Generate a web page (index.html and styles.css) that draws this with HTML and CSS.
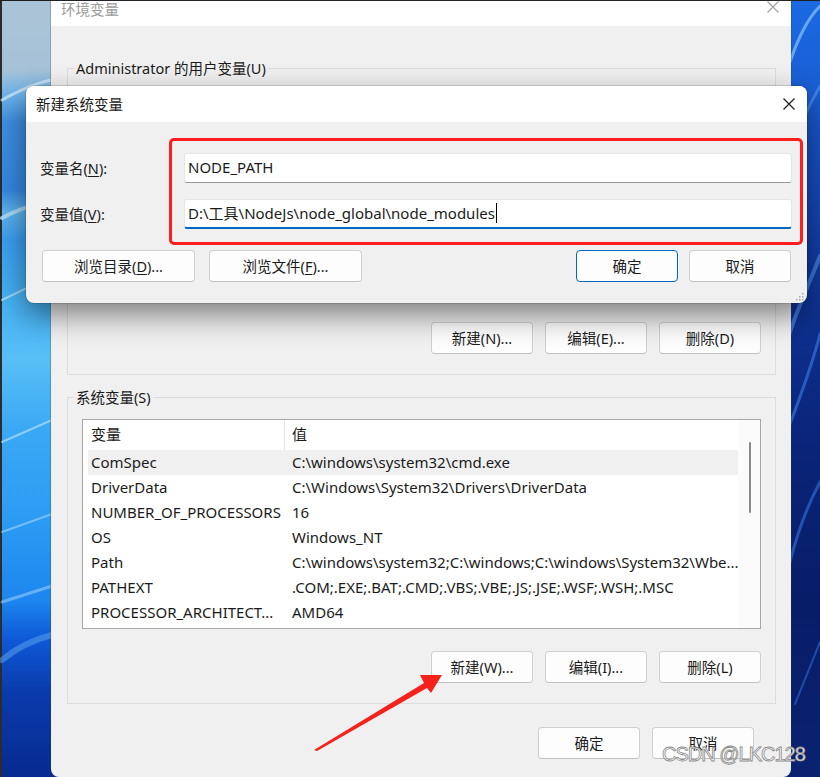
FILE: index.html
```html
<!DOCTYPE html>
<html lang="zh-CN">
<head>
<meta charset="utf-8">
<title>环境变量</title>
<link rel="stylesheet" href="styles.css">
</head>
<body>
<div class="desktop">
  <svg class="swirls" width="820" height="777" viewBox="0 0 820 777">
    <g fill="none" stroke-linecap="round">
      <path d="M2 100 C20 90 40 82 52 80" stroke="#d6ecfb" stroke-width="3" opacity=".7"/>
      <path d="M2 218 C20 208 40 203 52 199" stroke="#b6e2fa" stroke-width="4" opacity=".8"/>
      <path d="M2 300 L52 276" stroke="#cdeeff" stroke-width="2" opacity=".6"/>
      <path d="M2 442 L52 420" stroke="#c2e8ff" stroke-width="2" opacity=".6"/>
      <path d="M2 532 L52 514" stroke="#b8e2ff" stroke-width="2" opacity=".5"/>
      <path d="M2 602 L52 586" stroke="#a8d8ff" stroke-width="3" opacity=".5"/>
      <path d="M2 660 C20 645 40 638 52 635" stroke="#5fa8f0" stroke-width="6" opacity=".5"/>
      <path d="M790 62 C800 32 810 16 820 6" stroke="#7ab8ff" stroke-width="3" opacity=".8"/>
      <path d="M790 150 C802 120 812 100 820 86" stroke="#4a90ee" stroke-width="3" opacity=".7"/>
      <path d="M790 332 C800 302 810 282 820 256" stroke="#4a8cec" stroke-width="4" opacity=".7"/>
      <path d="M790 424 C805 384 815 354 820 334" stroke="#3672d8" stroke-width="3" opacity=".7"/>
      <path d="M790 562 C800 522 812 497 820 482" stroke="#2e66cc" stroke-width="3" opacity=".7"/>
      <path d="M795 704 L820 642" stroke="#2c5fc4" stroke-width="2" opacity=".7"/>
    </g>
  </svg>

  <div class="env-window">
    <div class="titlebar">
      <span class="title">环境变量</span>
      <svg class="close-x muted" width="12" height="12" viewBox="0 0 12 12"><path d="M0.5 0.5 L11.5 11.5 M11.5 0.5 L0.5 11.5"/></svg>
    </div>
    <div class="env-body">
      <fieldset class="group">
        <legend>Administrator 的用户变量(U)</legend>
        <div class="listbox"></div>
        <div class="btn-row">
          <button class="btn">新建(N)...</button>
          <button class="btn">编辑(E)...</button>
          <button class="btn">删除(D)</button>
        </div>
      </fieldset>

      <fieldset class="group group-sys">
        <legend>系统变量(S)</legend>
        <div class="listbox">
          <div class="list-table">
            <div class="row head"><span class="c-name">变量</span><span class="c-val">值</span></div>
            <div class="row selected"><span class="c-name">ComSpec</span><span class="c-val">C:\windows\system32\cmd.exe</span></div>
            <div class="row"><span class="c-name">DriverData</span><span class="c-val">C:\Windows\System32\Drivers\DriverData</span></div>
            <div class="row"><span class="c-name">NUMBER_OF_PROCESSORS</span><span class="c-val">16</span></div>
            <div class="row"><span class="c-name">OS</span><span class="c-val">Windows_NT</span></div>
            <div class="row"><span class="c-name">Path</span><span class="c-val">C:\windows\system32;C:\windows;C:\windows\System32\Wbe...</span></div>
            <div class="row"><span class="c-name">PATHEXT</span><span class="c-val">.COM;.EXE;.BAT;.CMD;.VBS;.VBE;.JS;.JSE;.WSF;.WSH;.MSC</span></div>
            <div class="row"><span class="c-name">PROCESSOR_ARCHITECT...</span><span class="c-val">AMD64</span></div>
          </div>
          <div class="scrollbar"><div class="thumb"></div></div>
        </div>
        <div class="btn-row">
          <button class="btn">新建(W)...</button>
          <button class="btn">编辑(I)...</button>
          <button class="btn">删除(L)</button>
        </div>
      </fieldset>

      <div class="footer-row">
        <button class="btn">确定</button>
        <button class="btn">取消</button>
      </div>
    </div>
  </div>

  <div class="dialog">
    <div class="dlg-title">
      <span>新建系统变量</span>
      <svg class="close-x" width="12" height="12" viewBox="0 0 12 12"><path d="M0.5 0.5 L11.5 11.5 M11.5 0.5 L0.5 11.5"/></svg>
    </div>
    <div class="dlg-body">
      <div class="field">
        <span class="field-label">变量名(<u>N</u>):</span>
        <div class="input">NODE_PATH</div>
      </div>
      <div class="field">
        <span class="field-label">变量值(<u>V</u>):</span>
        <div class="input focused">D:\工具\NodeJs\node_global\node_modules<span class="caret"></span></div>
      </div>
      <div class="dlg-buttons">
        <button class="btn wide">浏览目录(<u>D</u>)...</button>
        <button class="btn wide">浏览文件(<u>F</u>)...</button>
        <span class="spacer"></span>
        <button class="btn default">确定</button>
        <button class="btn">取消</button>
      </div>
    </div>
    <div class="highlight"></div>
    <svg class="grip" width="10" height="10" viewBox="0 0 10 10">
      <g fill="#a8a8a8">
        <rect x="8" y="2" width="1.5" height="1.5"/>
        <rect x="5" y="5" width="1.5" height="1.5"/><rect x="8" y="5" width="1.5" height="1.5"/>
        <rect x="2" y="8" width="1.5" height="1.5"/><rect x="5" y="8" width="1.5" height="1.5"/><rect x="8" y="8" width="1.5" height="1.5"/>
      </g>
    </svg>
  </div>

  <svg class="arrow" width="820" height="777" viewBox="0 0 820 777">
    <polygon points="314,750 424,683 420,675 442,675 431,693 427,688 317,751" fill="#f5221b"/>
  </svg>

  <div class="watermark">CSDN @LKC128</div>
</div>
</body>
</html>
```

FILE: styles.css
```css
* { box-sizing: border-box; }

html, body {
  margin: 0;
  padding: 0;
}

body {
  background: #1f1f1f;
  font-family: "Noto Sans", "Noto Sans CJK SC", sans-serif;
  font-size: 14.5px;
  color: #1b1b1b;
}

.desktop {
  position: relative;
  width: 820px;
  height: 777px;
  overflow: hidden;
  background:
    linear-gradient(#1e1e1e, #1e1e1e) left top / 100% 1px no-repeat,
    linear-gradient(#2c2c2c, #2c2c2c) left top / 2px 100% no-repeat,
    linear-gradient(180deg, #abc3d6 0, #a6c2d8 70px, #6eb3ea 95px, #3e8fe2 122px, #3487e0 190px, #5fb4ee 212px, #3a9ef0 240px, #46b2f4 300px, #58bff6 360px, #3aa8f4 430px, #2c9bf3 520px, #1d86ef 600px, #0e58d6 640px, #0a3cae 690px, #072a8e 777px) left top / 60px 100% no-repeat,
    linear-gradient(180deg, #1a6ae2 0, #1a5ed4 90px, #1547b8 200px, #0d2f8c 330px, #0a2478 450px, #081d68 600px, #0a2270 777px) right top / 40px 100% no-repeat,
    #0d3a9e;
}

.swirls {
  position: absolute;
  left: 0;
  top: 0;
}

/* ---------- main window ---------- */
.env-window {
  position: absolute;
  left: 51px;
  top: 1px;
  width: 740px;
  height: 776px;
  background: #f0f0f0;
  border-radius: 0 0 8px 8px;
  box-shadow: 0 0 0 1px rgba(40, 60, 80, 0.25);
  overflow: hidden;
}

.titlebar {
  height: 25px;
  background: #fff;
  display: flex;
  justify-content: space-between;
  align-items: flex-start;
  padding: 0 12px 0 10px;
}

.title {
  color: #9b9b9b;
  line-height: 16px;
}

.close-x path {
  stroke: #1b1b1b;
  stroke-width: 1.2;
  fill: none;
}

.close-x.muted path {
  stroke: #a3a3a3;
}

.env-body {
  padding: 32px 15px 0 16px;
}

.group {
  margin: 0;
  padding: 12px 14px 20px 14px;
  border: 1px solid #dcdcdc;
  min-width: 0;
}

.group legend {
  padding: 0 2px;
  margin-left: -8px;
  line-height: 20px;
}

.group-sys {
  margin-top: 12px;
}

.listbox {
  height: 210px;
  border: 1px solid #a5a5a5;
  background: #fff;
  display: flex;
}

.list-table {
  flex: 1;
  overflow: hidden;
}

.row {
  display: flex;
  margin-left: 5px;
  height: 25px;
  line-height: 25px;
  font-size: 15px;
  white-space: nowrap;
}

.row.head {
  height: 30px;
  line-height: 28px;
}

.row.selected {
  background: #f0f0f0;
}

.c-name {
  width: 197px;
  flex: none;
  padding-left: 3px;
  overflow: hidden;
}

.row.head .c-name {
  border-right: 1px solid #e5e5e5;
}

.c-val {
  padding-left: 7px;
}

.scrollbar {
  width: 22px;
  flex: none;
  background: #fbfbfb;
}

.thumb {
  width: 2px;
  height: 71px;
  margin: 22px 0 0 11px;
  border-radius: 1px;
  background: #8a8a8a;
}

.btn-row {
  display: flex;
  justify-content: flex-end;
  gap: 12px;
  margin-top: 22px;
}

.footer-row {
  display: flex;
  justify-content: flex-end;
  gap: 12px;
  margin-top: 23px;
  padding-right: 22px;
}

.btn {
  width: 102px;
  height: 32px;
  padding: 0 0 1px;
  border: 1px solid #d0d0d0;
  border-bottom-color: #c2c2c2;
  border-radius: 4px;
  background: #fdfdfd;
  font: inherit;
  color: #1b1b1b;
}

.btn u {
  text-underline-offset: 2px;
}

.btn.wide {
  width: 153px;
}

.btn.default {
  border-color: #0067c0;
}

/* ---------- dialog ---------- */
.dialog {
  position: absolute;
  left: 26px;
  top: 86px;
  width: 781px;
  height: 217px;
  background: #f0f0f0;
  border-radius: 8px;
  box-shadow: 0 0 0 1px rgba(0, 0, 0, 0.12), 0 12px 30px rgba(0, 0, 0, 0.48);
  overflow: hidden;
}

.dlg-title {
  height: 36px;
  background: #fff;
  display: flex;
  align-items: center;
  justify-content: space-between;
  padding: 0 12px 1px 10px;
}

.dlg-body {
  padding: 31px 15px 20px 14px;
}

.field {
  display: flex;
  align-items: center;
}

.field + .field {
  margin-top: 16px;
}

.field-label {
  width: 144px;
  flex: none;
  padding-bottom: 2px;
}

.field-label u {
  text-underline-offset: 2px;
}

.input {
  flex: 1;
  height: 30px;
  display: flex;
  align-items: center;
  padding: 0 0 2px 3px;
  background: #fff;
  border: 1px solid #e6e6e6;
  border-bottom-color: #9a9a9a;
  border-radius: 3px;
  font-size: 15px;
  white-space: nowrap;
}

.input.focused {
  border-bottom: 2px solid #0067c0;
}

.caret {
  display: inline-block;
  width: 1px;
  height: 20px;
  margin-left: 1px;
  background: #000;
}

.dlg-buttons {
  display: flex;
  gap: 11px;
  margin-top: 21px;
  padding: 0 1px 0 2px;
}

.dlg-buttons .btn.wide + .btn.wide {
  margin-left: 3px;
}

.spacer {
  flex: 1;
}

.highlight {
  position: absolute;
  left: 143px;
  top: 52px;
  width: 634px;
  height: 107px;
  border: 3px solid #ff1d1d;
  border-radius: 5px;
}

.grip {
  position: absolute;
  right: 3px;
  bottom: 2px;
}

/* ---------- overlays ---------- */
.arrow {
  position: absolute;
  left: 0;
  top: 0;
  pointer-events: none;
}

.watermark {
  position: absolute;
  left: 662px;
  top: 743px;
  font-family: "Liberation Sans", Arial, sans-serif;
  font-size: 20px;
  letter-spacing: -1px;
  color: #ffffff;
  -webkit-text-stroke: 0.8px #8a8a8a;
}
```
